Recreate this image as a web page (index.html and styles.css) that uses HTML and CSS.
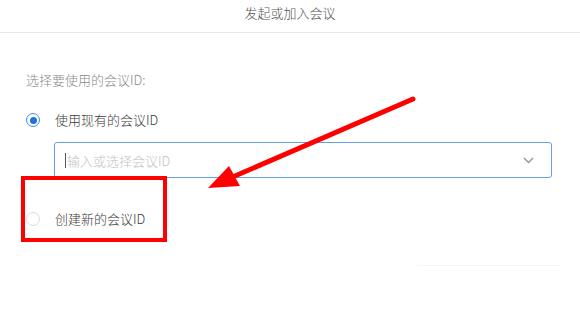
FILE: index.html
```html
<!DOCTYPE html>
<html lang="zh-CN">

<head>
    <meta charset="UTF-8">
    <meta name="viewport" content="width=device-width, initial-scale=1.0">
    <title>发起或加入会议</title>
    <link rel="stylesheet" href="styles.css">
</head>

<body>
    <div class="dialog">
        <div class="dialog-header">发起或加入会议</div>

        <div class="dialog-body">
            <div class="field-label">选择要使用的会议ID:</div>

            <label class="radio-row">
                <span class="radio checked"></span>
                <span class="radio-text">使用现有的会议ID</span>
            </label>

            <div class="select-box">
                <span class="caret"></span>
                <span class="placeholder">输入或选择会议ID</span>
                <svg class="chevron" width="11" height="7" viewBox="0 0 11 7">
                    <path d="M1 1 L5.5 5.5 L10 1" fill="none" stroke="#9a9a9a" stroke-width="1.5" />
                </svg>
            </div>

            <label class="radio-row second">
                <span class="radio"></span>
                <span class="radio-text">创建新的会议ID</span>
            </label>

            <div class="footer-hint"></div>
        </div>

        <!-- annotation overlay -->
        <div class="mark-box"></div>
        <svg class="mark-arrow" width="580" height="326" viewBox="0 0 580 326">
            <line x1="413" y1="99" x2="228" y2="179" stroke="#ff0000" stroke-width="5" stroke-linecap="round" />
            <polygon points="208,188 229,166 240,186" fill="#ff0000" />
        </svg>
    </div>
</body>

</html>
```

FILE: styles.css
```css
* {
    box-sizing: border-box;
    margin: 0;
    padding: 0;
    font-family: "Noto Sans CJK SC", "Liberation Sans", sans-serif;
    font-weight: 300;
}

body {
    background-color: #fff;
    width: 580px;
    height: 326px;
    overflow: hidden;
}

.dialog {
    position: relative;
    width: 580px;
    height: 326px;
}

.dialog-header {
    height: 33px;
    border-bottom: 1px solid #e8e8e8;
    text-align: center;
    font-size: 13px;
    line-height: 26px;
    color: #555;
}

.dialog-body {
    display: flex;
    flex-direction: column;
    padding-left: 26px;
}

.field-label {
    margin-top: 37px;
    font-size: 13px;
    line-height: 20px;
    color: #8a8a8a;
}

.radio-row {
    display: flex;
    align-items: center;
    gap: 15px;
    height: 20px;
    margin-top: 20px;
}

.radio-row.second {
    margin-top: 31px;
}

.radio {
    width: 14px;
    height: 14px;
    border-radius: 50%;
    border: 1px solid #dcdcdc;
    display: flex;
    align-items: center;
    justify-content: center;
}

.radio.checked {
    border: 1.5px solid #3d8be8;
}

.radio.checked::after {
    content: "";
    width: 7px;
    height: 7px;
    border-radius: 50%;
    background-color: #1e73e0;
}

.radio-text {
    font-size: 13px;
    line-height: 20px;
    color: #3a3a3a;
}

.select-box {
    display: flex;
    align-items: center;
    margin-top: 12px;
    margin-left: 28px;
    width: 498px;
    height: 36px;
    border: 1.5px solid #62a0ea;
    border-radius: 3px;
    padding-left: 10px;
    padding-right: 17px;
}

.caret {
    width: 1px;
    height: 15px;
    background-color: #555;
    margin-right: 1px;
}

.placeholder {
    flex: 1;
    font-size: 13px;
    color: #c2c2c2;
}

.footer-hint {
    align-self: flex-end;
    margin-top: 36px;
    margin-right: 20px;
    width: 143px;
    height: 1px;
    background-color: #f5f5f5;
}

.mark-box {
    position: absolute;
    left: 21px;
    top: 176px;
    width: 146px;
    height: 66px;
    border: 4px solid #ff0000;
}

.mark-arrow {
    position: absolute;
    left: 0;
    top: 0;
}
```
